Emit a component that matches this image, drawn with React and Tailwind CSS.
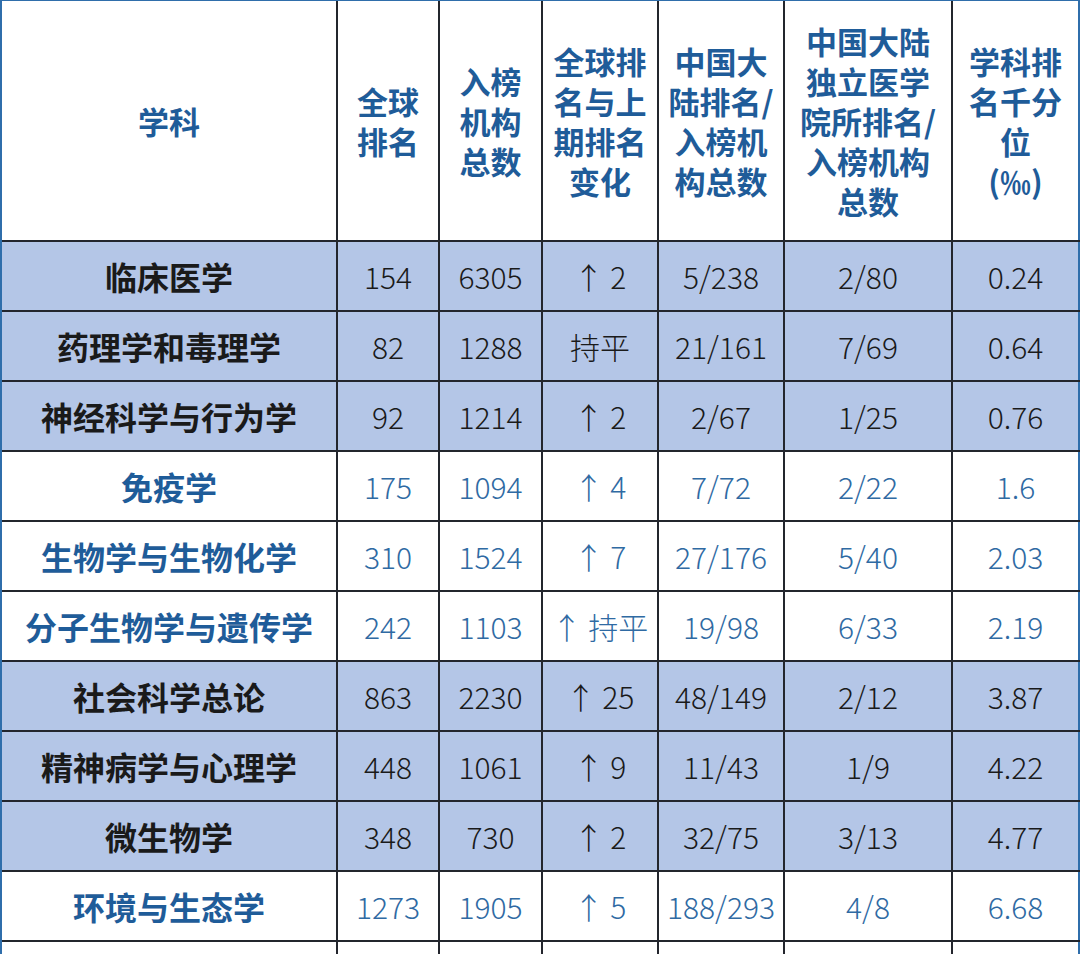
const cols = [
  "w-[336px]",
  "w-[102px]",
  "w-[103px]",
  "w-[116px]",
  "w-[126px]",
  "w-[168px]",
  "flex-1",
];

const headers = [
  ["学科"],
  ["全球", "排名"],
  ["入榜", "机构", "总数"],
  ["全球排", "名与上", "期排名", "变化"],
  ["中国大", "陆排名/", "入榜机", "构总数"],
  ["中国大陆", "独立医学", "院所排名/", "入榜机构", "总数"],
  ["学科排", "名千分", "位", "(‰)"],
];

const rows = [
  { shade: true, cells: ["临床医学", "154", "6305", "↑ 2", "5/238", "2/80", "0.24"] },
  { shade: true, cells: ["药理学和毒理学", "82", "1288", "持平", "21/161", "7/69", "0.64"] },
  { shade: true, cells: ["神经科学与行为学", "92", "1214", "↑ 2", "2/67", "1/25", "0.76"] },
  { shade: false, cells: ["免疫学", "175", "1094", "↑ 4", "7/72", "2/22", "1.6"] },
  { shade: false, cells: ["生物学与生物化学", "310", "1524", "↑ 7", "27/176", "5/40", "2.03"] },
  { shade: false, cells: ["分子生物学与遗传学", "242", "1103", "↑ 持平", "19/98", "6/33", "2.19"] },
  { shade: true, cells: ["社会科学总论", "863", "2230", "↑ 25", "48/149", "2/12", "3.87"] },
  { shade: true, cells: ["精神病学与心理学", "448", "1061", "↑ 9", "11/43", "1/9", "4.22"] },
  { shade: true, cells: ["微生物学", "348", "730", "↑ 2", "32/75", "3/13", "4.77"] },
  { shade: false, cells: ["环境与生态学", "1273", "1905", "↑ 5", "188/293", "4/8", "6.68"] },
];

function cellBorder(i) {
  return i === cols.length - 1
    ? "border-r-2 border-[#2f6eab]"
    : "border-r-2 border-[#23262d]";
}

export default function App() {
  return (
    <div
      className="w-[1080px] h-[954px] overflow-hidden bg-white"
      style={{ fontFamily: '"Noto Sans CJK SC", "Noto Sans", sans-serif' }}
    >
      <div className="border-l-2 border-t border-l-[#2f6eab] border-t-[#2f6eab]">
        {/* header */}
        <div className="flex h-[241px] border-b-2 border-[#23262d]">
          {headers.map((lines, i) => (
            <div
              key={i}
              className={`${cols[i]} ${cellBorder(i)} flex flex-col items-center justify-center text-[31px] leading-[40px] font-bold text-[#1f5c99] shrink-0`}
            >
              {lines.map((l) => (
                <span key={l} className="whitespace-nowrap">
                  {l}
                </span>
              ))}
            </div>
          ))}
        </div>

        {/* body */}
        {rows.map((row, r) => (
          <div
            key={r}
            className={`flex h-[70px] border-b-2 border-[#23262d] ${
              row.shade ? "bg-[#b4c6e7]" : "bg-white"
            }`}
          >
            {row.cells.map((c, i) => (
              <div
                key={i}
                className={`${cols[i]} ${cellBorder(i)} flex items-center justify-center whitespace-nowrap shrink-0 ${
                  i === 0 ? "font-bold text-[32px]" : "font-light text-[30px]"
                } ${
                  row.shade
                    ? "text-[#1a1a1a]"
                    : i === 0
                    ? "text-[#1f5c99]"
                    : "text-[#2f6aa3]"
                }`}
              >
                {c}
              </div>
            ))}
          </div>
        ))}

        {/* partial row */}
        <div className="flex h-[40px] bg-white">
          {cols.map((c, i) => (
            <div key={i} className={`${c} ${cellBorder(i)} shrink-0`} />
          ))}
        </div>
      </div>
    </div>
  );
}
